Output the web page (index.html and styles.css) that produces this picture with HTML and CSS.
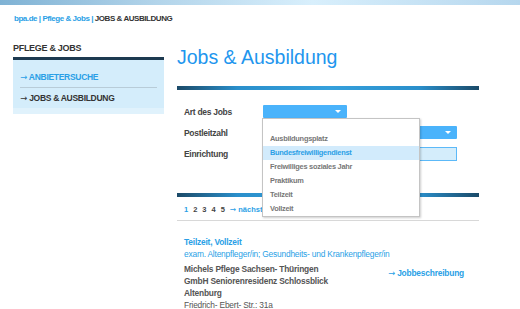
FILE: index.html
```html
<!DOCTYPE html>
<html lang="de">
<head>
    <meta charset="UTF-8">
    <title>Jobs &amp; Ausbildung</title>
    <link rel="stylesheet" href="styles.css">
</head>
<body>
    <div class="topbar"></div>
    <div class="breadcrumb">
        <a href="#">bpa.de</a> | <a href="#">Pflege &amp; Jobs</a> | <span class="current">JOBS &amp; AUSBILDUNG</span>
    </div>
    <div class="page">
        <div class="sidebar">
            <div class="side-title">PFLEGE &amp; JOBS</div>
            <div class="side-box">
                <a href="#" class="side-item active"><span class="arrow">&rarr;</span> ANBIETERSUCHE</a>
                <a href="#" class="side-item"><span class="arrow">&rarr;</span> JOBS &amp; AUSBILDUNG</a>
                <div class="side-foot"></div>
            </div>
        </div>
        <div class="main">
            <h1>Jobs &amp; Ausbildung</h1>
            <div class="rule"></div>
            <form class="search">
                <div class="row">
                    <label>Art des Jobs</label>
                    <div class="select-wrap">
                        <div class="select short"><span class="caret"></span></div>
                        <ul class="options">
                            <li class="blank"></li>
                            <li>Ausbildungsplatz</li>
                            <li class="hover">Bundesfreiwilligendienst</li>
                            <li>Freiwilliges soziales Jahr</li>
                            <li>Praktikum</li>
                            <li>Teilzeit</li>
                            <li>Vollzeit</li>
                        </ul>
                    </div>
                </div>
                <div class="row">
                    <label>Postleitzahl</label>
                    <div class="select long"><span class="caret"></span></div>
                </div>
                <div class="row">
                    <label>Einrichtung</label>
                    <div class="input"></div>
                </div>
            </form>
            <div class="rule"></div>
            <div class="pager">
                <a href="#" class="on">1</a>
                <span>2</span>
                <span>3</span>
                <span>4</span>
                <span>5</span>
                <a href="#" class="next"><span class="arrow">&rarr;</span> nächste</a>
            </div>
            <div class="thin"></div>
            <div class="job">
                <div class="job-info">
                    <div class="job-type">Teilzeit, Vollzeit</div>
                    <div class="job-title">exam. Altenpfleger/in; Gesundheits- und Krankenpfleger/in</div>
                    <div class="job-org">Michels Pflege Sachsen- Thüringen<br>GmbH Seniorenresidenz Schlossblick<br>Altenburg</div>
                    <div class="job-addr">Friedrich- Ebert- Str.: 31a</div>
                </div>
                <a href="#" class="job-link"><span class="arrow">&rarr;</span> Jobbeschreibung</a>
            </div>
        </div>
    </div>
</body>
</html>
```
FILE: styles.css
```css
body {
    font-family: "Liberation Sans", Arial, sans-serif;
    margin: 0;
    background-color: #fff;
    color: #444;
}
a {
    text-decoration: none;
    color: #2a9fe6;
}
.arrow {
    font-family: "DejaVu Sans", sans-serif;
    font-weight: normal;
    letter-spacing: 0;
}
.topbar {
    height: 5px;
    background: linear-gradient(to right, #7fb2d4 0%, #b2d4ea 30%, #d8effc 60%, #b6d7ee 100%);
}
.breadcrumb {
    font-size: 8px;
    letter-spacing: -0.45px;
    font-weight: bold;
    color: #2a9fe6;
    padding: 9px 0 0 14px;
    height: 15px;
}
.breadcrumb .current {
    color: #333;
}
.page {
    display: flex;
    padding-left: 13px;
    gap: 13px;
    margin-top: 14px;
}
.sidebar {
    width: 151px;
}
.side-title {
    font-size: 9px;
    letter-spacing: -0.3px;
    font-weight: bold;
    color: #333;
    height: 14px;
}
.side-box {
    border-top: 3px solid #1d3a50;
    background: #d4edfb;
    padding: 7px 7px 0 7px;
}
.side-item {
    display: block;
    font-size: 8.5px;
    letter-spacing: -0.3px;
    font-weight: bold;
    color: #333;
    line-height: 20px;
}
.side-item.active {
    color: #2a9fe6;
    border-bottom: 1px solid #b8ccd8;
}
.side-foot {
    height: 6px;
    margin: 0 -7px;
    background: #e0f2fc;
}
.main {
    width: 302px;
}
h1 {
    font-size: 19.5px;
    font-weight: normal;
    color: #1e96ee;
    margin: 0;
    height: 43px;
    line-height: 28px;
}
.rule {
    height: 4px;
    background: linear-gradient(to right, #1b4a68 0%, #2a8fcb 20%, #35a0dc 50%, #2a8fcb 80%, #1b4a68 100%);
}
.search {
    padding: 11px 0 29px 7px;
}
.row {
    display: flex;
    align-items: center;
    height: 21px;
}
.row label {
    width: 79px;
    font-size: 8.5px;
    letter-spacing: -0.3px;
    font-weight: bold;
    color: #444;
}
.select-wrap {
    position: relative;
}
.select {
    height: 13px;
    background: #4ab3fb;
    border-radius: 1px;
    position: relative;
}
.select.short {
    width: 84px;
}
.select.long {
    width: 194px;
}
.caret {
    position: absolute;
    right: 6px;
    top: 5px;
    border-left: 3px solid transparent;
    border-right: 3px solid transparent;
    border-top: 3px solid #fff;
}
.input {
    width: 192px;
    height: 12px;
    background: #d4edfb;
    border: 1px solid #5cb9f8;
}
.options {
    position: absolute;
    top: 13px;
    left: -1px;
    width: 156px;
    margin: 0;
    padding: 0;
    list-style: none;
    background: #fff;
    border: 1px solid #c4c4c4;
    box-shadow: 1px 1px 2px rgba(0, 0, 0, 0.2);
    z-index: 2;
}
.options li {
    font-size: 7.4px;
    letter-spacing: -0.25px;
    font-weight: bold;
    color: #777;
    height: 14px;
    line-height: 14px;
    padding-left: 7px;
}
.options li.blank {
    height: 13px;
}
.options li.hover {
    background: #d2ebfc;
    color: #2a9fe6;
}
.pager {
    display: flex;
    gap: 5px;
    font-size: 7.5px;
    font-weight: bold;
    color: #444;
    padding: 8px 0 0 7px;
    height: 15px;
}
.thin {
    height: 1px;
    background: #d8d8d8;
}
.job {
    display: flex;
    padding: 16px 0 0 7px;
}
.job-info {
    width: 204px;
    font-size: 8.4px;
    letter-spacing: -0.2px;
}
.job-type {
    color: #2a9fe6;
    font-weight: bold;
    line-height: 11px;
}
.job-title {
    color: #2a9fe6;
    line-height: 12px;
    white-space: nowrap;
}
.job-org {
    font-weight: bold;
    color: #555;
    line-height: 12px;
    margin-top: 3px;
}
.job-addr {
    color: #555;
    line-height: 12px;
}
.job-link {
    font-size: 8.4px;
    letter-spacing: -0.2px;
    font-weight: bold;
    margin-top: 31px;
}
```
